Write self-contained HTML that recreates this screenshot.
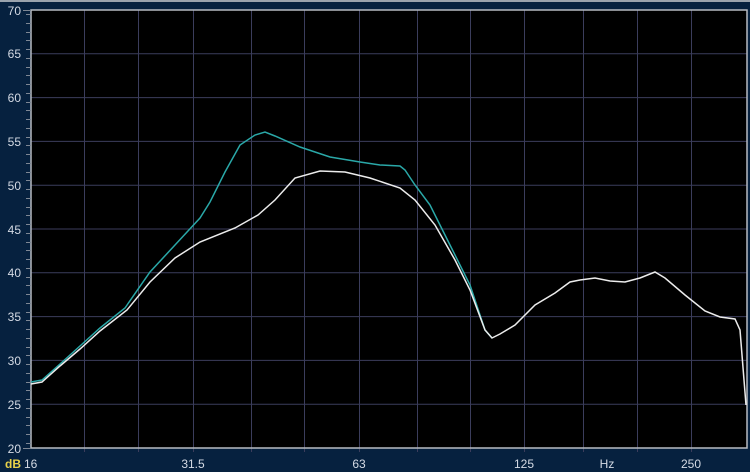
<!DOCTYPE html>
<html><head><style>
html,body{margin:0;padding:0;background:#06213f;}
svg{display:block}
text{font-family:"Liberation Sans",sans-serif;font-size:12px;fill:#d4dae4}
</style></head><body>
<svg width="750" height="472" viewBox="0 0 750 472">
<rect x="0" y="0" width="750" height="472" fill="#06213f"/>
<rect x="0" y="0" width="750" height="2" fill="#9aa3ad"/>
<rect x="31" y="10" width="716" height="438" fill="#000"/>
<g stroke="#3b3d5c" stroke-width="1">
<line x1="84.5" y1="10" x2="84.5" y2="452"/>
<line x1="138.5" y1="10" x2="138.5" y2="452"/>
<line x1="193.5" y1="10" x2="193.5" y2="452"/>
<line x1="251.5" y1="10" x2="251.5" y2="452"/>
<line x1="304.5" y1="10" x2="304.5" y2="452"/>
<line x1="359.5" y1="10" x2="359.5" y2="452"/>
<line x1="417.5" y1="10" x2="417.5" y2="452"/>
<line x1="470.5" y1="10" x2="470.5" y2="452"/>
<line x1="524.5" y1="10" x2="524.5" y2="452"/>
<line x1="583.5" y1="10" x2="583.5" y2="452"/>
<line x1="637.5" y1="10" x2="637.5" y2="452"/>
<line x1="691.5" y1="10" x2="691.5" y2="452"/>
<line x1="31" y1="53.8" x2="747" y2="53.8"/>
<line x1="31" y1="97.6" x2="747" y2="97.6"/>
<line x1="31" y1="141.4" x2="747" y2="141.4"/>
<line x1="31" y1="185.2" x2="747" y2="185.2"/>
<line x1="31" y1="229" x2="747" y2="229"/>
<line x1="31" y1="272.8" x2="747" y2="272.8"/>
<line x1="31" y1="316.6" x2="747" y2="316.6"/>
<line x1="31" y1="360.4" x2="747" y2="360.4"/>
<line x1="31" y1="404.2" x2="747" y2="404.2"/>
</g>
<g stroke="#7e8794" stroke-width="1" id="ticks"></g>
<rect x="31" y="10" width="716" height="438" fill="none" stroke="#b8bcc2" stroke-width="1.5"/>
<polyline fill="none" stroke="#2aa8a8" stroke-width="1.5" points="31,382 42,380 60,364 80,346 100,328 125,308 150,272 175,245 200,218 210,202 225,172 240,145 255,135 265,132 275,136 300,147 330,157 360,162 380,165 400,166 405,170 415,185 430,205 450,245 470,285 485,330 492,338"/>
<polyline fill="none" stroke="#ececec" stroke-width="1.5" points="31,384 42,382 60,366 80,349 100,331 127,310 150,282 175,258 200,242 235,228 258,215 275,200 295,178 320,171 345,172 370,178 400,188 415,200 435,225 455,260 470,290 485,330 492,338 500,334 515,325 535,305 555,293 570,282 580,280 595,278 610,281 625,282 640,278 655,272 665,278 685,295 705,311 720,317 735,319 740,330 746,405"/>
<g text-anchor="end">
<text x="21" y="15">70</text><text x="21" y="58">65</text><text x="21" y="102">60</text>
<text x="21" y="146">55</text><text x="21" y="190">50</text><text x="21" y="234">45</text>
<text x="21" y="277">40</text><text x="21" y="321">35</text><text x="21" y="365">30</text>
<text x="21" y="409">25</text><text x="21" y="453">20</text>
</g>
<text x="5" y="468" style="fill:#e8d24a;font-weight:bold">dB</text>
<text x="24" y="468">16</text>
<g text-anchor="middle">
<text x="193" y="468">31.5</text><text x="359" y="468">63</text><text x="524" y="468">125</text>
<text x="607" y="468">Hz</text><text x="691" y="468">250</text>
</g>
<g stroke="#7e8794">
<path d="M26 14.5h5M26 23.5h5M26 32.5h5M26 40.5h5M26 49.5h5M26 58.5h5M26 67.5h5M26 75.5h5M26 84.5h5M26 93.5h5M26 102.5h5M26 110.5h5M26 119.5h5M26 128.5h5M26 137.5h5M26 145.5h5M26 154.5h5M26 163.5h5M26 172.5h5M26 180.5h5M26 189.5h5M26 198.5h5M26 207.5h5M26 215.5h5M26 224.5h5M26 233.5h5M26 242.5h5M26 250.5h5M26 259.5h5M26 268.5h5M26 277.5h5M26 285.5h5M26 294.5h5M26 303.5h5M26 312.5h5M26 320.5h5M26 329.5h5M26 338.5h5M26 347.5h5M26 355.5h5M26 364.5h5M26 373.5h5M26 382.5h5M26 390.5h5M26 399.5h5M26 408.5h5M26 417.5h5M26 425.5h5M26 434.5h5M26 443.5h5"/>
<path d="M23 10.5h8M23 448.5h8"/>
</g>
</svg>
</body></html>
